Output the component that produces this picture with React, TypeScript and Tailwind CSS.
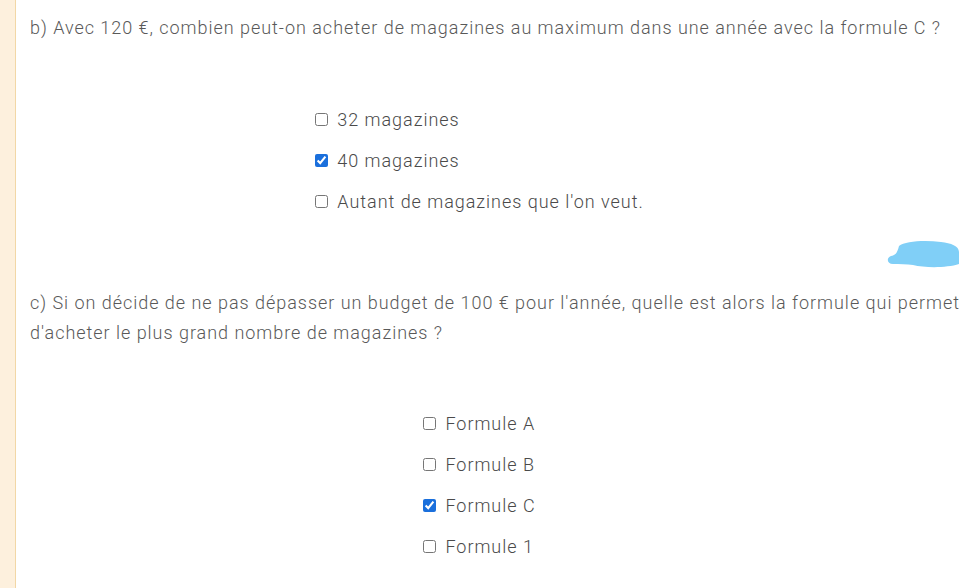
import React from "react";

type Option = { label: string; checked?: boolean };

const questionB: Option[] = [
  { label: "32 magazines" },
  { label: "40 magazines", checked: true },
  { label: "Autant de magazines que l'on veut." },
];

const questionC: Option[] = [
  { label: "Formule A" },
  { label: "Formule B" },
  { label: "Formule C", checked: true },
  { label: "Formule 1" },
];

const Choices = ({ options }: { options: Option[] }) => (
  <div className="flex justify-center">
    <div className="flex flex-col">
      {options.map((o) => (
        <label key={o.label} className="flex items-center h-[41px] text-[18px] text-[#4a4a4a]">
          <input
            type="checkbox"
            defaultChecked={o.checked}
            className="m-0 mr-[9px] w-[13px] h-[13px] accent-[#1a6fdc]"
          />
          <span>{o.label}</span>
        </label>
      ))}
    </div>
  </div>
);

export default function App() {
  return (
    <div
      className="relative flex w-[959px] h-[588px] overflow-hidden bg-white font-light tracking-[0.97px]"
      style={{ fontFamily: "Roboto, 'Liberation Sans', sans-serif" }}
    >
      {/* bande de gauche */}
      <div className="w-[16px] shrink-0 bg-[#fdf0dd] border-r border-[#f2d7a6]" />

      <div className="flex-1 pl-[14px] pt-[13px] text-[18px] leading-[30px] text-[#595959]">
        <p>b) Avec 120 €, combien peut-on acheter de magazines au maximum dans une année avec la formule C ?</p>

        <div className="mt-[56px] -ml-[30px]">
          <Choices options={questionB} />
        </div>

        <p className="mt-[66px] -mr-[4px]">
          c) Si on décide de ne pas dépasser un budget de 100 € pour l'année, quelle est alors la formule qui permet
          d'acheter le plus grand nombre de magazines ?
        </p>

        <div className="mt-[55px] -ml-[30px]">
          <Choices options={questionC} />
        </div>
      </div>

      {/* gribouillis bleu */}
      <svg className="absolute left-[885px] top-[238px]" width="74" height="32" viewBox="0 0 74 32">
        <path
          d="M14 8 C20 3 40 2 56 4 C66 5 74 8 74 14 L74 26 C62 30 40 30 28 27 C22 26 14 26 8 26 C2 26 1 20 6 18 C10 17 12 16 14 8 Z"
          fill="#80cff7"
        />
      </svg>
    </div>
  );
}
